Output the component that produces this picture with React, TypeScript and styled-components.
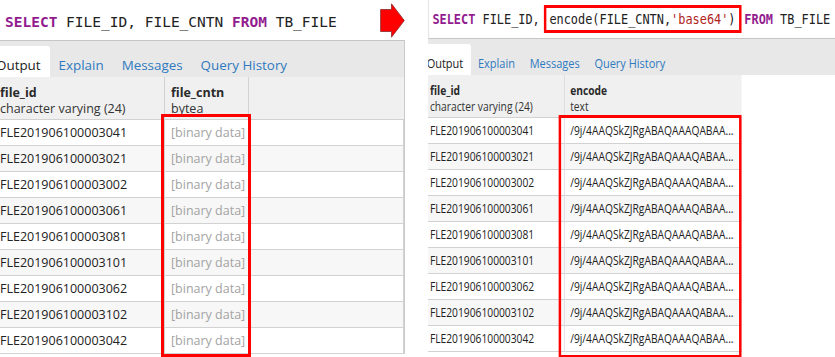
import React from 'react'
import styled, { createGlobalStyle } from 'styled-components'

const GlobalStyle = createGlobalStyle`
    html, body {
        margin: 0;
        padding: 0;
        background: #fff;
    }
    body {
        font-family: "Open Sans", "Liberation Sans", sans-serif;
        color: #222;
    }
`

const fileIds = [
    'FLE201906100003041',
    'FLE201906100003021',
    'FLE201906100003002',
    'FLE201906100003061',
    'FLE201906100003081',
    'FLE201906100003101',
    'FLE201906100003062',
    'FLE201906100003102',
    'FLE201906100003042',
]

const tabs = ['Output', 'Explain', 'Messages', 'Query History']

const ResultTabs: React.FunctionComponent = () => (
    <TabBar>
        {tabs.map((tab, i) => (
            <Tab key={tab} $active={i === 0}>{tab}</Tab>
        ))}
    </TabBar>
)

const Arrow = () => (
    <svg width="25" height="35" viewBox="0 0 25 35">
        <path
            d="M0.6 6.5 H11.5 V0.8 L24.3 17.5 L11.5 34.2 V28.5 H0.6 Z"
            fill="#ff0000"
            stroke="#8c2a2a"
            strokeWidth="0.8"
        />
    </svg>
)

export default function App() {
    return (
        <Screen>
            <GlobalStyle />
            <Panel $width={405}>
                <Content $shift={-6} $width={411}>
                    <Editor $height={40}>
                        <Sql $indent={11} $lift={4}>
                            <Keyword>SELECT</Keyword> FILE_ID, FILE_CNTN <Keyword>FROM</Keyword> TB_FILE
                        </Sql>
                        <Arrow />
                    </Editor>
                    <Results $bordered>
                        <ResultTabs />
                        <Grid $columns="171px 84px 1fr">
                            <HeadCell>
                                <ColName>file_id</ColName>
                                <ColType>character varying (24)</ColType>
                            </HeadCell>
                            <HeadCell>
                                <ColName>file_cntn</ColName>
                                <ColType>bytea</ColType>
                            </HeadCell>
                            <HeadCell />
                        </Grid>
                        <Body>
                            {fileIds.map((id, i) => (
                                <Grid key={id} $columns="171px 84px 1fr">
                                    <Cell $striped={i % 2 === 1}>{id}</Cell>
                                    <Cell $striped={i % 2 === 1} $muted>[binary data]</Cell>
                                    <Cell $striped={i % 2 === 1} />
                                </Grid>
                            ))}
                            <Highlight $left={167} $top={-6} $width={90} $height={243} />
                        </Body>
                    </Results>
                </Content>
            </Panel>

            <Panel $width={407}>
                <Content $shift={-3.4} $width={505} $squeeze={0.82}>
                    <Editor $height={38} $edge>
                        <Sql $indent={4} $lift={0}>
                            <Keyword>SELECT</Keyword> FILE_ID, <Boxed>encode(FILE_CNTN,<Str>'base64'</Str>)</Boxed> <Keyword>FROM</Keyword> TB_FILE
                        </Sql>
                    </Editor>
                    <Results>
                        <ResultTabs />
                        <Grid $columns="171px 215px">
                            <HeadCell>
                                <ColName>file_id</ColName>
                                <ColType>character varying (24)</ColType>
                            </HeadCell>
                            <HeadCell>
                                <ColName>encode</ColName>
                                <ColType>text</ColType>
                            </HeadCell>
                        </Grid>
                        <Body>
                            {fileIds.map((id, i) => (
                                <Grid key={id} $columns="171px 215px">
                                    <Cell $striped={i % 2 === 1}>{id}</Cell>
                                    <Cell $striped={i % 2 === 1}>/9j/4AAQSkZJRgABAQAAAQABAA...</Cell>
                                </Grid>
                            ))}
                            <Highlight $left={163} $top={-3} $width={223} $height={243} />
                        </Body>
                    </Results>
                </Content>
            </Panel>
        </Screen>
    )
}

const Screen = styled.div`
    display: flex;
    flex-direction: row;
    gap: 23px;
    width: 835px;
    height: 357px;
    overflow: hidden;
    background: #fff;
`

const Panel = styled.div<{ $width: number }>`
    flex: none;
    width: ${({ $width }) => $width}px;
    height: 357px;
    overflow: hidden;
`

const Content = styled.div<{ $shift: number; $width: number; $squeeze?: number }>`
    width: ${({ $width }) => $width}px;
    margin-left: ${({ $shift }) => $shift}px;
    transform-origin: left top;
    transform: ${({ $squeeze }) => ($squeeze ? `scaleX(${$squeeze})` : 'none')};
`

const Editor = styled.div<{ $height: number; $edge?: boolean }>`
    display: flex;
    flex-direction: row;
    align-items: center;
    justify-content: space-between;
    height: ${({ $height }) => $height}px;
    margin-left: ${({ $edge }) => ($edge ? '4px' : '0')};
    border-left: ${({ $edge }) => ($edge ? '1px solid #dcdcdc' : 'none')};
    border-bottom: 1px solid #c6c6c6;
    background: #fff;
`

const Sql = styled.div<{ $indent: number; $lift: number }>`
    padding-left: ${({ $indent }) => $indent}px;
    padding-top: ${({ $lift }) => $lift}px;
    font-family: "DejaVu Sans Mono", "Liberation Mono", monospace;
    font-size: 14.5px;
    color: #222;
    white-space: pre;
`

const Keyword = styled.span`
    color: #921c8f;
    font-weight: bold;
`

const Str = styled.span`
    color: #b0241c;
`

const Boxed = styled.span`
    display: inline-block;
    line-height: 22px;
    padding: 0 4px;
    margin: 0 -5px 0 -4px;
    border: 3px solid #f00;
`

const Results = styled.div<{ $bordered?: boolean }>`
    border-right: ${({ $bordered }) => ($bordered ? '1px solid #cbcbcb' : 'none')};
`

const TabBar = styled.div`
    display: flex;
    flex-direction: row;
    align-items: flex-end;
    height: 36px;
    background: #e8e8e8;
`

const Tab = styled.div<{ $active?: boolean }>`
    height: 31px;
    box-sizing: border-box;
    padding: 9px 9px 0;
    margin-left: ${({ $active }) => ($active ? '-7px' : '0')};
    font-size: 13.4px;
    line-height: 20px;
    color: ${({ $active }) => ($active ? '#222' : '#2f7abf')};
    background: ${({ $active }) => ($active ? '#fff' : 'transparent')};
    border-radius: 3px 3px 0 0;
`

const Grid = styled.div<{ $columns: string }>`
    display: grid;
    grid-template-columns: ${({ $columns }) => $columns};
`

const HeadCell = styled.div`
    box-sizing: border-box;
    height: 43px;
    padding: 8px 6px 2px;
    background: #f0f0f0;
    border-right: 1px solid #d2d2d2;
    border-bottom: 1px solid #d2d2d2;
    &:last-child {
        border-right: none;
    }
`

const ColName = styled.div`
    font-size: 12.5px;
    line-height: 16px;
    font-weight: bold;
    color: #2a2a2a;
`

const ColType = styled.div`
    font-size: 12.5px;
    line-height: 16px;
    color: #333;
    white-space: nowrap;
`

const Body = styled.div`
    position: relative;
`

const Cell = styled.div<{ $striped?: boolean; $muted?: boolean }>`
    box-sizing: border-box;
    height: 26px;
    padding: 0 1px 0 6px;
    font-size: 12.5px;
    line-height: 25px;
    color: ${({ $muted }) => ($muted ? '#a3a3a3' : '#222')};
    background: ${({ $striped }) => ($striped ? '#f7f7f7' : '#fff')};
    border-right: 1px solid #d2d2d2;
    border-bottom: 1px solid #d2d2d2;
    white-space: nowrap;
    overflow: hidden;
    text-overflow: ellipsis;
`

const Highlight = styled.div<{ $left: number; $top: number; $width: number; $height: number }>`
    position: absolute;
    left: ${({ $left }) => $left}px;
    top: ${({ $top }) => $top}px;
    width: ${({ $width }) => $width}px;
    height: ${({ $height }) => $height}px;
    box-sizing: border-box;
    border: 3px solid #f00;
    pointer-events: none;
`
